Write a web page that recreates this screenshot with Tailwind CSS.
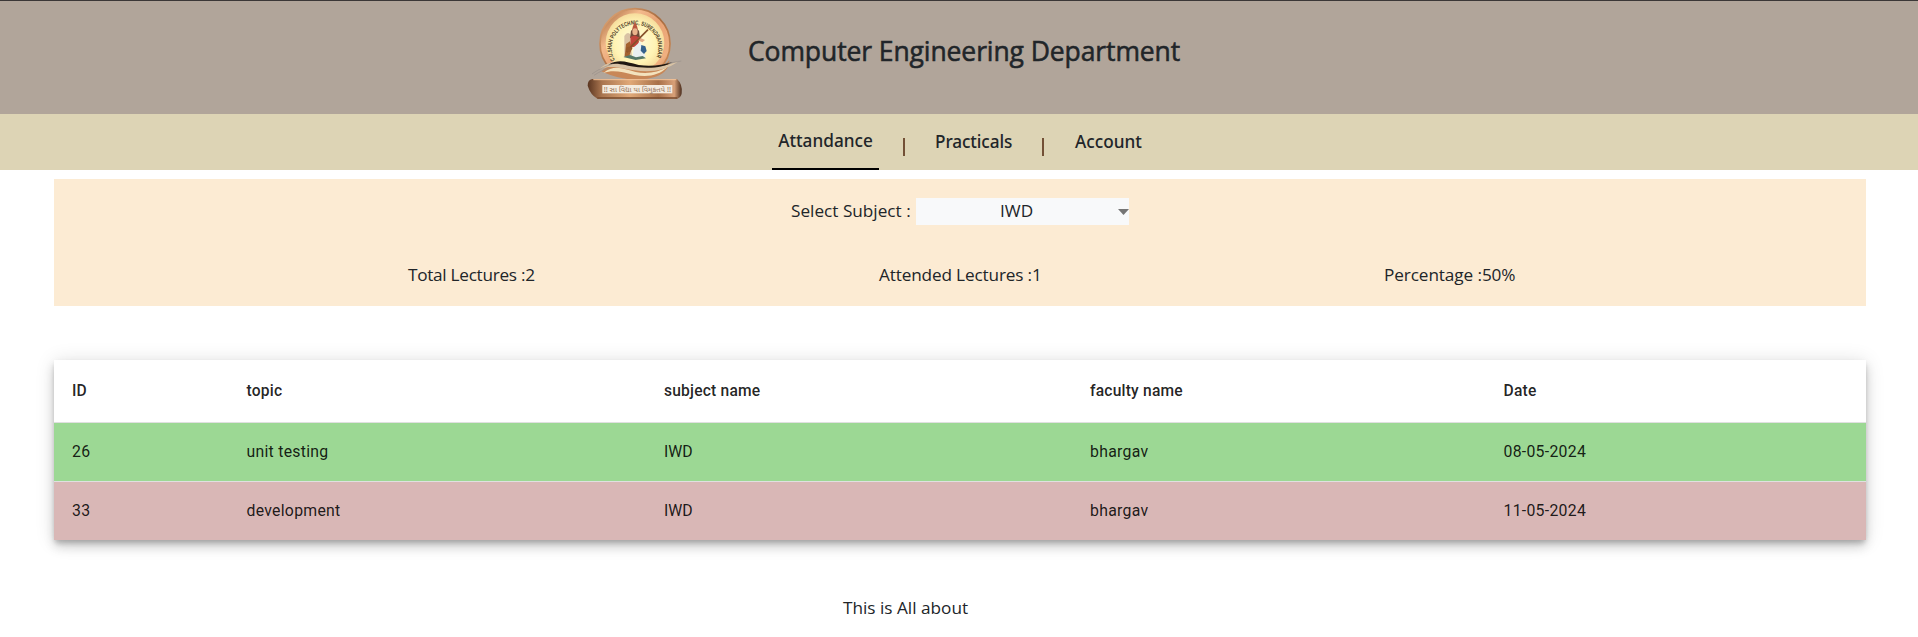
<!DOCTYPE html>
<html lang="en">
<head>
<meta charset="utf-8">
<title>Computer Engineering Department</title>
<script src="https://cdn.jsdelivr.net/npm/@tailwindcss/browser@4"></script>
</head>
<body class="h-[637px] overflow-hidden bg-white font-['Open_Sans','Noto_Sans',sans-serif] text-[17.2px] leading-[26px] text-[#212529]">
<header class="flex h-[114px] items-start border-t border-[#3b3737] bg-[#b1a59a] pl-[570px]">
  <svg class="-mt-px h-[114px] w-[130px] shrink-0" viewBox="0 0 390 342">
    <defs>
      <linearGradient id="ring" x1="0" y1="0" x2="1" y2="1"><stop offset="0" stop-color="#9a5c30"/><stop offset=".3" stop-color="#f3ba8c"/><stop offset=".5" stop-color="#e8a274"/><stop offset=".8" stop-color="#f0b080"/><stop offset="1" stop-color="#a8683a"/></linearGradient>
      <linearGradient id="rim" x1="0" y1="0" x2="1" y2="1"><stop offset="0" stop-color="#e5ac7c"/><stop offset=".5" stop-color="#a86c40"/><stop offset="1" stop-color="#d8935c"/></linearGradient>
      <radialGradient id="disc"><stop offset="0" stop-color="#fffbe0"/><stop offset=".7" stop-color="#fff3b4"/><stop offset="1" stop-color="#f6dc9c"/></radialGradient>
      <linearGradient id="plate"><stop offset="0" stop-color="#5a3520"/><stop offset=".15" stop-color="#a9754f"/><stop offset=".45" stop-color="#e0a878"/><stop offset=".75" stop-color="#a87048"/><stop offset=".92" stop-color="#d8a078"/><stop offset="1" stop-color="#4a2c1c"/></linearGradient>
      <path id="arc" d="M135 180A70 70 0 1 1 257 176"/>
    </defs>
    <circle cx="195" cy="131" r="105" fill="url(#ring)" stroke="url(#rim)" stroke-width="5"/>
    <circle cx="195" cy="128" r="88" fill="url(#disc)"/>
    <text class="font-['Liberation_Sans',sans-serif] text-[18px] font-bold" fill="#4b3a25"><textPath href="#arc" textLength="286" lengthAdjust="spacingAndGlyphs">C.U.SHAH POLYTECHNIC, SURENDRANAGAR</textPath></text>
    <path d="M163 172V108q8-14 17-6l6 70z" fill="#d9c2a4"/>
    <path d="M168 132l12-8 6 20-8 24-14 2z" fill="#a4622f"/>
    <path d="M186 90l3-12 6-11 6 11 3 12z" fill="#b9573f"/>
    <path d="M183 92q12-12 24 0l3 22h-30z" fill="#6e4b38"/>
    <ellipse cx="195" cy="95" rx="8" ry="10" fill="#eab48c"/>
    <path d="M181 111l14-5 14 7-5 25-22 5z" fill="#c0453b"/>
    <path d="M192 142l18-17 10 24 7 22-40 2z" fill="#e9eff0"/>
    <path d="M214 135l12 4 4 14-8 9-10-10z" fill="#35618c"/>
    <path d="M207 112l18 8-8 7-14-6z" fill="#e3ab86"/>
    <path d="M172 151l62-62M170 156l16-12" fill="none" stroke="#86502a" stroke-width="5"/>
    <circle cx="176" cy="148" r="8" fill="#97592c"/>
    <path d="M160 171l20-6 18 7 20-4 10 7-31 5z" fill="#557867"/>
    <path d="M94 214C120 188 145 193 194 203S280 207 298 180C299 218 259 240 194 238C143 237 110 221 94 214z" fill="#c88757"/>
    <path d="M88 207C130 171 157 193 202 201C247 207 289 197 326 184C284 214 239 218 193 211C147 204 127 194 88 207z" fill="#d9c3a4"/>
    <path d="M115 194C148 176 168 186 206 195C245 201 276 195 308 186C286 201 246 206 205 202C163 197 146 186 115 194z" fill="#201812"/>
    <path d="M100 219C132 192 159 205 197 216C232 224 265 216 292 202C266 227 234 232 193 225C154 216 130 209 100 219z" fill="#f3e2bd"/>
    <path d="M66 222C91 204 110 198 128 192M72 226C90 214 104 208 120 204M295 190C310 187 322 185 334 183" fill="none" stroke="#98908a" stroke-width="2"/>
    <path d="M67 237H321Q338 252 335 280Q334 292 322 296H82Q61 284 53 257Q53 239 67 237z" fill="url(#plate)"/>
    <path d="M70 239H319" stroke="#f3c49b" stroke-width="3"/>
    <path d="M82 294H322" stroke="#76482b" stroke-width="4"/>
    <rect x="97" y="255" width="210" height="25" fill="#f4ebdf"/>
    <text x="101" y="275" textLength="202" lengthAdjust="spacingAndGlyphs" class="font-['Noto_Sans_Gujarati','Noto_Sans',sans-serif] text-[21px]" fill="#947258">!! સા વિદ્યા યા વિમુક્તયે !!</text>
  </svg>
  <h1 class="ml-[48px] mt-[30px] whitespace-nowrap text-[26.5px] leading-[40px] tracking-[-0.1px] [-webkit-text-stroke:0.55px_#212529]">Computer Engineering Department</h1>
</header>
<nav class="flex h-[56px] items-start bg-[#ddd4b5] font-['Noto_Sans',sans-serif] pl-[772px] font-medium">
  <a class="h-[56px] w-[107px] border-b-2 border-black pt-[14px] text-center whitespace-nowrap">Attandance</a>
  <span class="ml-[24px] mt-[24px] h-[18px] w-[2px] bg-[#735036]"></span>
  <a class="ml-[30px] w-[78px] pt-[15px] whitespace-nowrap tracking-[-0.1px]">Practicals</a>
  <span class="ml-[29px] mt-[24px] h-[18px] w-[2px] bg-[#735036]"></span>
  <a class="ml-[31px] pt-[15px] whitespace-nowrap">Account</a>
</nav>
<main class="pl-[54px] pr-[52px] pt-[9px]">
  <section class="h-[127px] bg-[#fcebd3] pt-[19px]">
    <div class="flex h-[27px] items-center pl-[737px]">
      <label class="-mt-[2px] w-[125px] whitespace-nowrap">Select Subject :</label>
      <div class="flex h-[27px] w-[213px] items-center bg-[#f8f9fa] pl-[84px]">
        <span class="-mt-[2px] w-[118px]">IWD</span>
        <svg class="h-[6px] w-[11px]" viewBox="0 0 11 6"><path d="M0 0h11L5.500 6z" fill="#757575"/></svg>
      </div>
    </div>
    <div class="flex whitespace-nowrap pt-[37px] tracking-[-0.15px]">
      <p class="ml-[354px] w-[471px] tracking-[-0.28px]">Total Lectures :2</p>
      <p class="w-[505px]">Attended Lectures :1</p>
      <p class="tracking-[-0.1px]">Percentage :50%</p>
    </div>
  </section>
  <div class="mt-[54px] rounded shadow-[0_3.3px_5.5px_-1.1px_rgba(0,0,0,0.2),0_6.6px_11px_0_rgba(0,0,0,0.14),0_1.1px_19.8px_0_rgba(0,0,0,0.12)]">
  <table class="h-[180px] w-full table-fixed border-separate border-spacing-0 text-left font-[Roboto,sans-serif] text-[15.8px] leading-[22px] tracking-[0.28px] text-black/87">
    <colgroup><col class="w-[174.500px]"><col class="w-[417.500px]"><col class="w-[426px]"><col class="w-[413.500px]"><col></colgroup>
    <thead><tr class="h-[63px] bg-white text-[15.6px] tracking-[0.2px] *:border-b *:border-[#e0e0e0] *:py-0 *:pr-0 *:pl-[18px] *:font-medium">
      <th>ID</th><th>topic</th><th>subject name</th><th>faculty name</th><th>Date</th>
    </tr></thead>
    <tbody class="[&_td]:py-0 [&_td]:pr-0 [&_td]:pl-[18px]">
      <tr class="h-[59px] bg-[#9cd894] *:border-b *:border-[#e0e0e0]"><td>26</td><td>unit testing</td><td class="tracking-normal">IWD</td><td>bhargav</td><td>08-05-2024</td></tr>
      <tr class="h-[58px] bg-[#d9b7b6]"><td>33</td><td>development</td><td class="tracking-normal">IWD</td><td>bhargav</td><td>11-05-2024</td></tr>
    </tbody>
  </table>
  </div>
  <p class="pl-[789px] pt-[55px]">This is All about</p>
</main>
</body>
</html>
